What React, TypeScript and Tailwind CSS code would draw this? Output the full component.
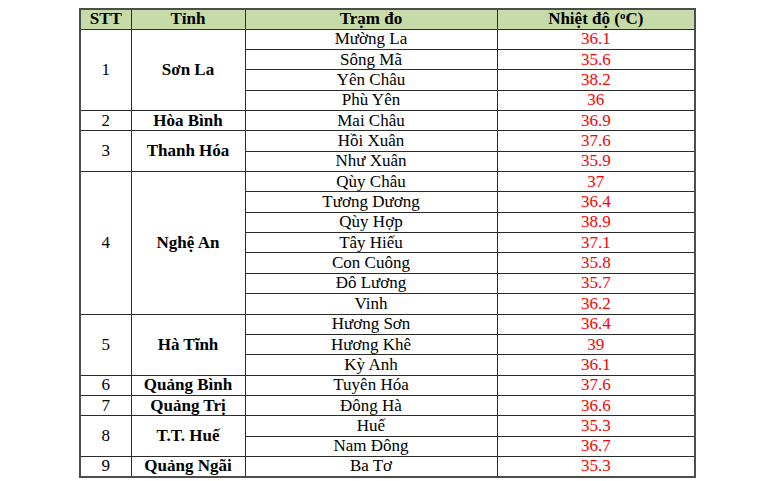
const groups = [
  { stt: 1, tinh: 'Sơn La', rows: [['Mường La', '36.1'], ['Sông Mã', '35.6'], ['Yên Châu', '38.2'], ['Phù Yên', '36']] },
  { stt: 2, tinh: 'Hòa Bình', rows: [['Mai Châu', '36.9']] },
  { stt: 3, tinh: 'Thanh Hóa', rows: [['Hồi Xuân', '37.6'], ['Như Xuân', '35.9']] },
  {
    stt: 4,
    tinh: 'Nghệ An',
    rows: [
      ['Qùy Châu', '37'],
      ['Tương Dương', '36.4'],
      ['Qùy Hợp', '38.9'],
      ['Tây Hiếu', '37.1'],
      ['Con Cuông', '35.8'],
      ['Đô Lương', '35.7'],
      ['Vinh', '36.2'],
    ],
  },
  { stt: 5, tinh: 'Hà Tĩnh', rows: [['Hương Sơn', '36.4'], ['Hương Khê', '39'], ['Kỳ Anh', '36.1']] },
  { stt: 6, tinh: 'Quảng Bình', rows: [['Tuyên Hóa', '37.6']] },
  { stt: 7, tinh: 'Quảng Trị', rows: [['Đông Hà', '36.6']] },
  { stt: 8, tinh: 'T.T. Huế', rows: [['Huế', '35.3'], ['Nam Đông', '36.7']] },
  { stt: 9, tinh: 'Quảng Ngãi', rows: [['Ba Tơ', '35.3']] },
];

const cell = 'border border-[#2b2b2b] p-0 text-center align-middle';

export default function App() {
  return (
    <div className="w-[770px] h-[481px] bg-white pt-[8px] pl-[79px]" style={{ fontFamily: '"Liberation Serif", serif' }}>
      <table className="border-collapse border-2 border-[#4d4d4d] text-[17px] leading-[18px] text-black table-fixed w-[615px]">
        <colgroup>
          <col className="w-[51px]" />
          <col className="w-[114px]" />
          <col className="w-[252px]" />
          <col className="w-[198px]" />
        </colgroup>
        <thead>
          <tr className="bg-[#c6dba8] font-bold">
            <th className={`${cell} h-[20px]`}>STT</th>
            <th className={cell}>Tỉnh</th>
            <th className={cell}>Trạm đo</th>
            <th className={cell}>
              Nhiệt độ (<sup className="text-[11px]">o</sup>C)
            </th>
          </tr>
        </thead>
        <tbody>
          {groups.map((g) =>
            g.rows.map(([tram, temp], i) => (
              <tr key={g.stt + '-' + i}>
                {i === 0 && (
                  <>
                    <td rowSpan={g.rows.length} className={cell}>
                      {g.stt}
                    </td>
                    <td rowSpan={g.rows.length} className={`${cell} font-bold`}>
                      {g.tinh}
                    </td>
                  </>
                )}
                <td className={`${cell} h-[20.36px]`}>{tram}</td>
                <td className={`${cell} text-[#ff0000]`}>{temp}</td>
              </tr>
            ))
          )}
        </tbody>
      </table>
    </div>
  );
}
